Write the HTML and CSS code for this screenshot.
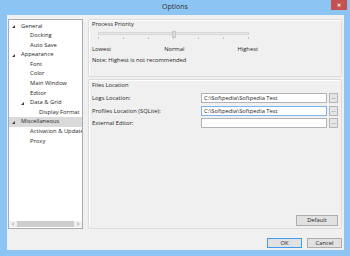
FILE: index.html
```html
<!DOCTYPE html>
<html lang="en">
<head>
  <meta charset="UTF-8">
  <title>Options</title>
  <link rel="stylesheet" href="styles.css">
</head>
<body>
 <div class="window">
   <div class="titlebar">
     <span class="title">Options</span>
     <span class="close">&#x2715;</span>
   </div>
   <div class="client">
     <div class="top">
       <div class="tree">
         <div class="items">
           <div class="row lv0"><i class="arrow"></i>General</div>
           <div class="row lv1">Docking</div>
           <div class="row lv1">Auto Save</div>
           <div class="row lv0"><i class="arrow"></i>Appearance</div>
           <div class="row lv1">Font</div>
           <div class="row lv1">Color</div>
           <div class="row lv1">Main Window</div>
           <div class="row lv1">Editor</div>
           <div class="row lv1b"><i class="arrow"></i>Data &amp; Grid</div>
           <div class="row lv2">Display Format</div>
           <div class="row lv0 selected"><i class="arrow"></i>Miscellaneous</div>
           <div class="row lv1">Activation &amp; Updates</div>
           <div class="row lv1">Proxy</div>
         </div>
         <div class="hscroll">
           <span class="sarrow">&#x2039;</span>
           <span class="thumb"></span>
           <span class="sarrow">&#x203A;</span>
         </div>
       </div>
       <div class="panel">
         <div class="group priority">
           <div class="gtitle">Process Priority</div>
           <div class="slider">
             <div class="track"><span class="knob"></span></div>
             <div class="ticks">
               <i></i><i></i><i></i><i></i><i></i><i></i><i></i>
             </div>
           </div>
           <div class="levels">
             <span>Lowest</span>
             <span>Normal</span>
             <span>Highest</span>
           </div>
           <div class="note">Note: Highest is not recommended</div>
         </div>
         <div class="group files">
           <div class="gtitle">Files Location</div>
           <div class="field">
             <span class="label">Logs Location:</span>
             <span class="input">C:\Softpedia\Softpedia Test</span>
             <span class="browse">...</span>
           </div>
           <div class="field">
             <span class="label">Profiles Location (SQLite):</span>
             <span class="input focus">C:\Softpedia\Softpedia Test</span>
             <span class="browse">...</span>
           </div>
           <div class="field">
             <span class="label">External Editor:</span>
             <span class="input"></span>
             <span class="browse">...</span>
           </div>
           <div class="btn default">Default</div>
         </div>
       </div>
     </div>
     <div class="actions">
       <div class="btn primary">OK</div>
       <div class="btn">Cancel</div>
     </div>
   </div>
 </div>
</body>
</html>
```

FILE: styles.css
```css
body{
  margin: 0;
  background: #8cc4f4;
  font-family: "Open Sans", "Noto Sans", sans-serif;
  font-size: 5.8px;
  color: #1e1e1e;
}
.window{
  width: 350px;
  height: 256px;
  display: flex;
  flex-direction: column;
}
.titlebar{
  height: 15px;
  position: relative;
  display: flex;
  justify-content: center;
}
.title{
  font-size: 7px;
  line-height: 14px;
  color: #333;
}
.close{
  position: absolute;
  top: 0;
  right: 3px;
  width: 16px;
  height: 10px;
  background: #c75050;
  color: #fff;
  font-size: 5px;
  font-weight: bold;
  line-height: 10px;
  text-align: center;
}
.client{
  margin: 0 6px 6px 7px;
  height: 235px;
  background: #f0f0f0;
  padding: 3px 2px 0 1px;
  box-sizing: border-box;
}
.top{
  display: flex;
  gap: 5px;
}
.tree{
  margin-top: 1px;
  width: 75px;
  height: 210px;
  box-sizing: border-box;
  background: #fff;
  border: 1px solid #a8abb2;
  display: flex;
  flex-direction: column;
  justify-content: space-between;
  overflow: hidden;
}
.items{
  padding-top: 1.5px;
  white-space: nowrap;
}
.row{
  height: 9.6px;
  line-height: 9.6px;
  position: relative;
}
.lv0{ padding-left: 12px; }
.lv1{ padding-left: 21px; }
.lv1b{ padding-left: 21px; }
.lv2{ padding-left: 30px; }
.selected{ background: #dadada; }
.arrow{
  position: absolute;
  top: 3.5px;
  width: 0;
  height: 0;
  border-left: 3px solid transparent;
  border-bottom: 3px solid #3c3c3c;
}
.lv0 .arrow{ left: 3px; }
.lv1b .arrow{ left: 12px; }
.hscroll{
  height: 6px;
  margin-bottom: 1px;
  display: flex;
  align-items: center;
  background: #f0f0f0;
}
.sarrow{
  width: 8px;
  text-align: center;
  font-size: 7px;
  line-height: 6px;
  color: #606060;
}
.thumb{
  flex: 1;
  height: 6px;
  background: #cdcdcd;
}
.panel{
  width: 254px;
  height: 210px;
  margin-top: 1px;
  display: flex;
  flex-direction: column;
  gap: 2px;
}
.group{
  border: 1px solid #dcdcdc;
  border-radius: 2px;
  box-shadow: inset 1px 1px 0 #fff;
  padding: 0 3px;
  box-sizing: border-box;
}
.priority{ height: 58px; }
.files{
  height: 150px;
  display: flex;
  flex-direction: column;
}
.gtitle{
  line-height: 6px;
  padding-top: 1px;
}
.files .gtitle{ padding-top: 2px; }
.slider{
  margin: 5px 0 0 6px;
  width: 151px;
}
.track{
  height: 3px;
  box-sizing: border-box;
  background: #e7eaea;
  border: 1px solid #d6d6d6;
  position: relative;
}
.knob{
  position: absolute;
  left: 73px;
  top: -2px;
  width: 2px;
  height: 5px;
  background: #dcdcdc;
  border: 0.5px solid #c8c8c8;
}
.ticks{
  margin-top: 2px;
  height: 2px;
  display: flex;
  justify-content: space-between;
}
.ticks i{
  width: 1px;
  height: 1.5px;
  background: #c4c4c4;
}
.levels{
  margin-top: 7px;
  width: 166px;
  line-height: 6px;
  display: flex;
  justify-content: space-between;
}
.note{
  margin-top: 5px;
  line-height: 6px;
}
.field{
  height: 10px;
  display: flex;
  align-items: center;
  margin-top: 2.5px;
}
.files .gtitle + .field{ margin-top: 5px; }
.label{
  width: 109px;
}
.input{
  width: 126px;
  height: 10px;
  box-sizing: border-box;
  background: #fff;
  border: 1px solid #b0b3b9;
  padding-left: 2px;
  line-height: 8px;
}
.input.focus{ border-color: #7eb4ea; }
.browse{
  margin-left: 2px;
  width: 9px;
  height: 10px;
  box-sizing: border-box;
  background: #e5e5e5;
  border: 1px solid #b4b4b4;
  text-align: center;
  line-height: 6px;
  font-size: 5px;
  color: #444;
}
.btn{
  width: 35px;
  height: 10px;
  box-sizing: border-box;
  background: #e1e1e1;
  border: 1px solid #adadad;
  text-align: center;
  line-height: 8px;
}
.default{
  margin-top: auto;
  margin-bottom: 2px;
  align-self: flex-end;
  width: 42px;
  height: 11px;
  line-height: 9px;
}
.actions{
  margin-top: 9px;
  display: flex;
  justify-content: flex-end;
  gap: 5px;
}
.primary{ border-color: #3c9cf0; }
```
